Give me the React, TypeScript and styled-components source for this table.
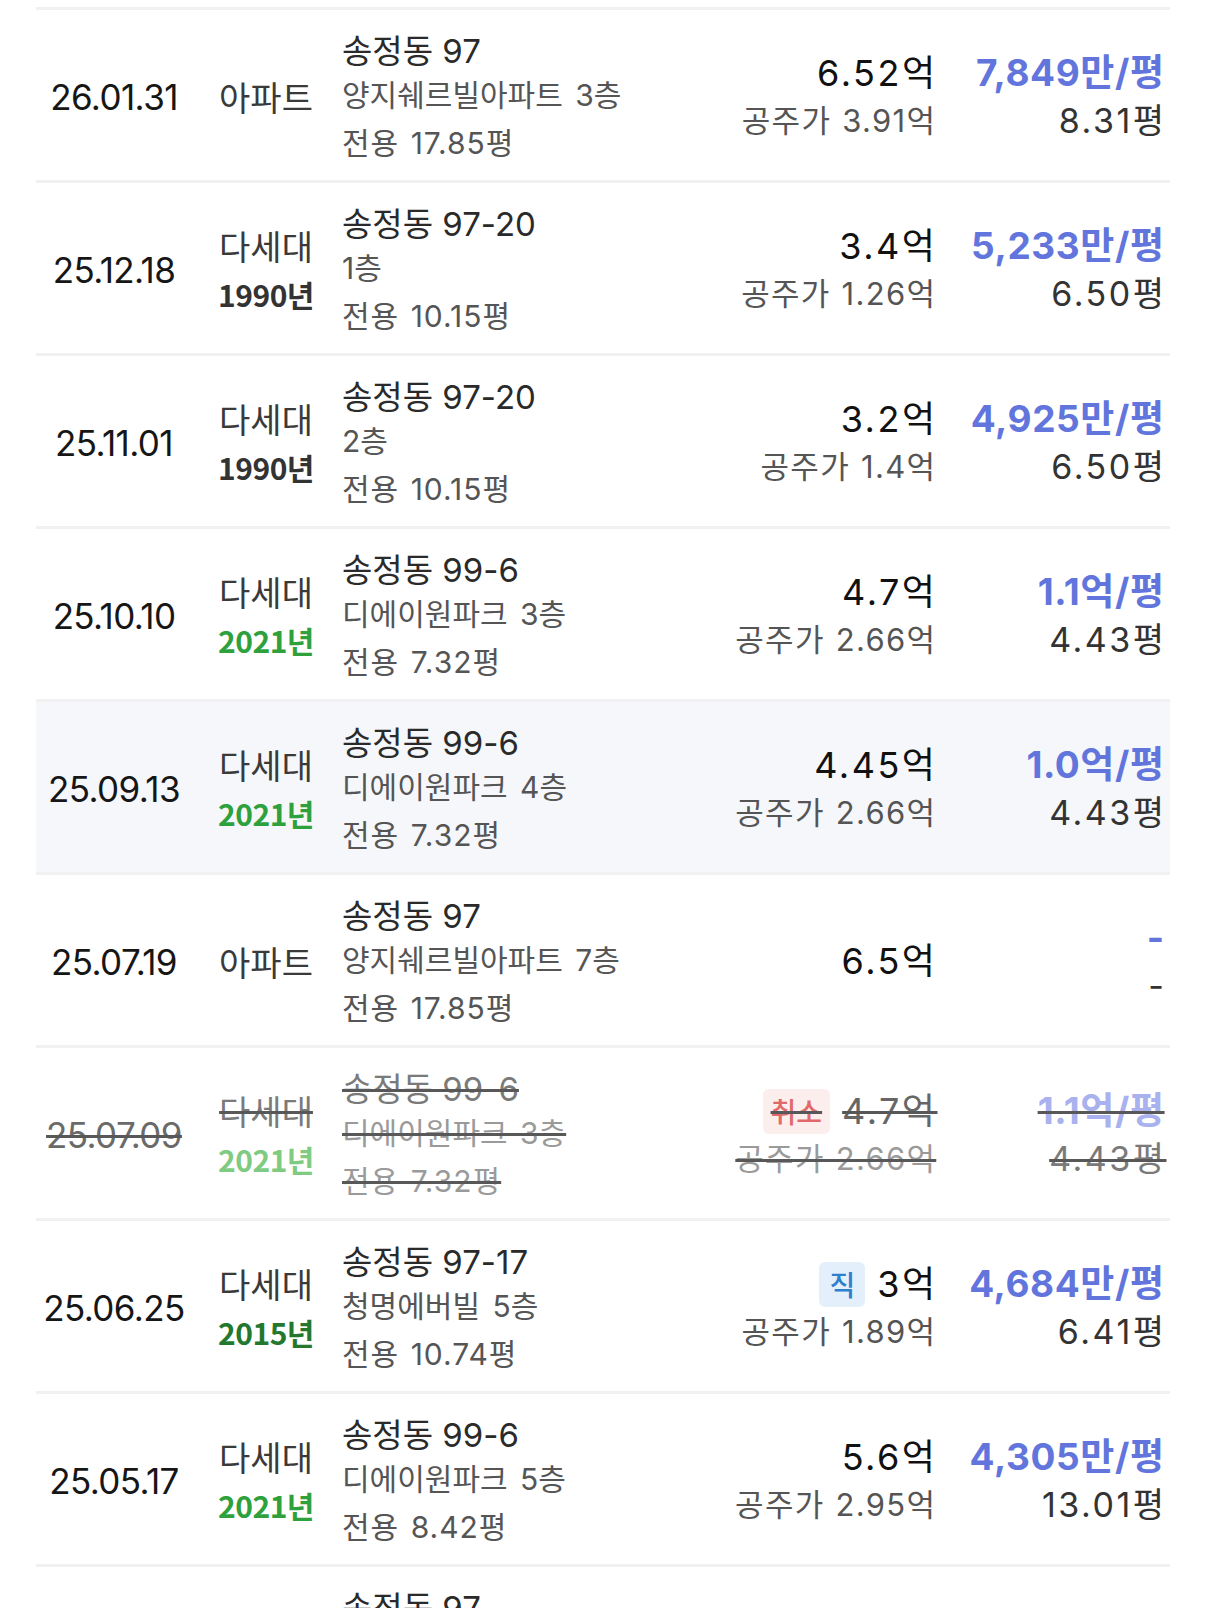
import React from "react";
import styled, { createGlobalStyle, css } from "styled-components";

const GlobalStyle = createGlobalStyle`
  html, body { margin: 0; padding: 0; background: #ffffff; }
  body {
    font-family: Inter, "Noto Sans CJK KR", "Noto Sans", sans-serif;
    -webkit-font-smoothing: antialiased;
  }
`;

const KR = `"Noto Sans CJK KR", "Noto Sans", sans-serif`;
const MIX = `Inter, "Noto Sans CJK KR", "Noto Sans", sans-serif`;

const struck = css`
  text-decoration: line-through;
  text-decoration-color: #585858;
  text-decoration-thickness: 3px;
`;

type S = { $struck?: boolean };

const List = styled.div`
  padding: 7px 36px 0;
`;

const Row = styled.div<{ $highlight?: boolean }>`
  display: grid;
  grid-template-columns: 156px 148px 1fr auto 229px;
  align-items: center;
  box-sizing: border-box;
  height: 173px;
  padding: 3px 6px 0 0;
  border-top: 3px solid #f1f1f2;
  background: ${(p) => (p.$highlight ? "#f5f7fa" : "transparent")};
`;

const DateCell = styled.div<S>`
  text-align: center;
  font-family: ${MIX};
  font-size: 35px;
  letter-spacing: -0.6px;
  line-height: 44px;
  color: ${(p) => (p.$struck ? "#6a6a6a" : "#161616")};
  ${(p) => p.$struck && struck}
`;

const TypeCell = styled.div`
  display: flex;
  flex-direction: column;
  align-items: center;
`;

const TypeName = styled.span<S>`
  font-family: ${KR};
  font-size: 34px;
  line-height: 48px;
  color: ${(p) => (p.$struck ? "#7a7a7a" : "#3a3a3a")};
  ${(p) => p.$struck && struck}
`;

type YearTone = "plain" | "green" | "dark" | "faded";
const yearColors: Record<YearTone, string> = {
  plain: "#333333",
  green: "#2fa13c",
  dark: "#23782d",
  faded: "#7fcb82",
};

const Year = styled.span<{ $tone: YearTone }>`
  font-family: ${KR};
  font-size: 30px;
  font-weight: 700;
  line-height: 48px;
  letter-spacing: -0.5px;
  color: ${(p) => yearColors[p.$tone]};
`;

const AddressCell = styled.div`
  display: flex;
  flex-direction: column;
  align-items: flex-start;
  padding-left: 2px;
`;

const Title = styled.span<S>`
  font-family: ${MIX};
  font-size: 33px;
  line-height: 44px;
  color: ${(p) => (p.$struck ? "#7a7a7a" : "#2a2a2a")};
  ${(p) => p.$struck && struck}
`;

const SubLine = styled.span<S>`
  font-family: ${MIX};
  font-size: 30px;
  line-height: 44px;
  word-spacing: 4px;
  color: ${(p) => (p.$struck ? "#9a9a9a" : "#555555")};
  ${(p) => p.$struck && struck}
`;

const AreaLine = styled(SubLine)`
  margin-top: 4px;
  letter-spacing: 1px;
  word-spacing: 2px;
`;

const PriceCell = styled.div`
  display: flex;
  flex-direction: column;
  align-items: flex-end;
`;

const PriceLine = styled.div`
  display: flex;
  align-items: center;
  gap: 12px;
  height: 47px;
`;

const Price = styled.span<S>`
  font-family: ${MIX};
  font-size: 36px;
  letter-spacing: 2.5px;
  margin-right: -2.5px;
  line-height: 47px;
  color: ${(p) => (p.$struck ? "#666666" : "#111111")};
  ${(p) => p.$struck && struck}
`;

type BadgeKind = "cancel" | "direct";
const Badge = styled.span<{ $kind: BadgeKind }>`
  display: inline-flex;
  align-items: center;
  justify-content: center;
  height: 45px;
  padding: 0 ${(p) => (p.$kind === "cancel" ? "8px" : "10px")};
  border-radius: 6px;
  font-family: ${KR};
  font-size: 28px;
  font-weight: 500;
  background: ${(p) => (p.$kind === "cancel" ? "#fdeeee" : "#e3f0fb")};
  color: ${(p) => (p.$kind === "cancel" ? "#e06a6a" : "#2f7fcf")};
  ${(p) => p.$kind === "cancel" && struck}
`;

const Official = styled.span<S>`
  font-family: ${MIX};
  font-size: 31px;
  letter-spacing: 1.3px;
  word-spacing: 1px;
  margin-right: -1.3px;
  line-height: 47px;
  color: ${(p) => (p.$struck ? "#9a9a9a" : "#555555")};
  ${(p) => p.$struck && struck}
`;

const UnitCell = styled.div`
  display: flex;
  flex-direction: column;
  align-items: flex-end;
`;

const UnitPrice = styled.span<S>`
  font-family: ${MIX};
  font-size: 37px;
  font-weight: 700;
  letter-spacing: 0.6px;
  margin-right: -0.6px;
  line-height: 48px;
  color: ${(p) => (p.$struck ? "#a9b1ee" : "#6275dc")};
  ${(p) => p.$struck && struck}
`;

const Area = styled.span<S>`
  font-family: ${MIX};
  font-size: 34px;
  letter-spacing: 2.5px;
  margin-right: -2.5px;
  line-height: 48px;
  color: ${(p) => (p.$struck ? "#7a7a7a" : "#333333")};
  ${(p) => p.$struck && struck}
`;

type Deal = {
  date: string;
  type: string;
  year?: string;
  yearTone?: YearTone;
  title: string;
  sub: string;
  area: string;
  price: string;
  badge?: BadgeKind;
  official?: string;
  unit: string;
  pyeong: string;
  highlight?: boolean;
  cancelled?: boolean;
};

const deals: Deal[] = [
  { date: "26.01.31", type: "아파트", title: "송정동 97", sub: "양지쉐르빌아파트 3층", area: "전용 17.85평", price: "6.52억", official: "공주가 3.91억", unit: "7,849만/평", pyeong: "8.31평" },
  { date: "25.12.18", type: "다세대", year: "1990년", yearTone: "plain", title: "송정동 97-20", sub: "1층", area: "전용 10.15평", price: "3.4억", official: "공주가 1.26억", unit: "5,233만/평", pyeong: "6.50평" },
  { date: "25.11.01", type: "다세대", year: "1990년", yearTone: "plain", title: "송정동 97-20", sub: "2층", area: "전용 10.15평", price: "3.2억", official: "공주가 1.4억", unit: "4,925만/평", pyeong: "6.50평" },
  { date: "25.10.10", type: "다세대", year: "2021년", yearTone: "green", title: "송정동 99-6", sub: "디에이원파크 3층", area: "전용 7.32평", price: "4.7억", official: "공주가 2.66억", unit: "1.1억/평", pyeong: "4.43평" },
  { date: "25.09.13", type: "다세대", year: "2021년", yearTone: "green", title: "송정동 99-6", sub: "디에이원파크 4층", area: "전용 7.32평", price: "4.45억", official: "공주가 2.66억", unit: "1.0억/평", pyeong: "4.43평", highlight: true },
  { date: "25.07.19", type: "아파트", title: "송정동 97", sub: "양지쉐르빌아파트 7층", area: "전용 17.85평", price: "6.5억", unit: "-", pyeong: "-" },
  { date: "25.07.09", type: "다세대", year: "2021년", yearTone: "faded", title: "송정동 99-6", sub: "디에이원파크 3층", area: "전용 7.32평", price: "4.7억", badge: "cancel", official: "공주가 2.66억", unit: "1.1억/평", pyeong: "4.43평", cancelled: true },
  { date: "25.06.25", type: "다세대", year: "2015년", yearTone: "dark", title: "송정동 97-17", sub: "청명에버빌 5층", area: "전용 10.74평", price: "3억", badge: "direct", official: "공주가 1.89억", unit: "4,684만/평", pyeong: "6.41평" },
  { date: "25.05.17", type: "다세대", year: "2021년", yearTone: "green", title: "송정동 99-6", sub: "디에이원파크 5층", area: "전용 8.42평", price: "5.6억", official: "공주가 2.95억", unit: "4,305만/평", pyeong: "13.01평" },
  { date: "25.04.30", type: "아파트", title: "송정동 97", sub: "양지쉐르빌아파트 5층", area: "전용 17.85평", price: "6.3억", official: "공주가 3.91억", unit: "7,580만/평", pyeong: "8.31평" },
];

const badgeText: Record<BadgeKind, string> = { cancel: "취소", direct: "직" };

function DealRow({ d }: { d: Deal }) {
  const s = !!d.cancelled;
  return (
    <Row $highlight={d.highlight}>
      <DateCell $struck={s}>{d.date}</DateCell>
      <TypeCell>
        <TypeName $struck={s}>{d.type}</TypeName>
        {d.year && <Year $tone={d.yearTone ?? "plain"}>{d.year}</Year>}
      </TypeCell>
      <AddressCell>
        <Title $struck={s}>{d.title}</Title>
        <SubLine $struck={s}>{d.sub}</SubLine>
        <AreaLine $struck={s}>{d.area}</AreaLine>
      </AddressCell>
      <PriceCell>
        <PriceLine>
          {d.badge && <Badge $kind={d.badge}>{badgeText[d.badge]}</Badge>}
          <Price $struck={s}>{d.price}</Price>
        </PriceLine>
        {d.official && <Official $struck={s}>{d.official}</Official>}
      </PriceCell>
      <UnitCell>
        <UnitPrice $struck={s}>{d.unit}</UnitPrice>
        <Area $struck={s}>{d.pyeong}</Area>
      </UnitCell>
    </Row>
  );
}

export default function App() {
  return (
    <>
      <GlobalStyle />
      <List>
        {deals.map((d, i) => (
          <DealRow key={i} d={d} />
        ))}
      </List>
    </>
  );
}
